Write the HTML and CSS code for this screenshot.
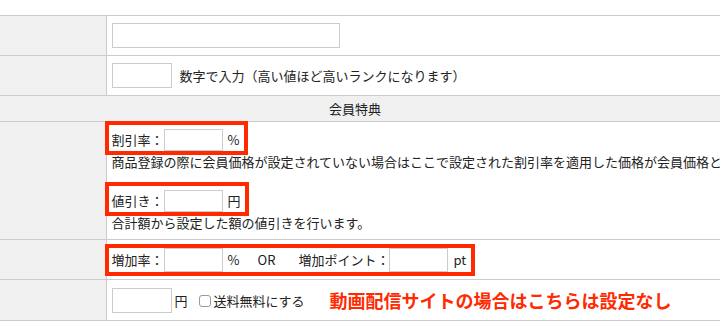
FILE: index.html
```html
<!DOCTYPE html>
<html lang="ja">
<head>
    <meta charset="UTF-8">
    <meta name="viewport" content="width=device-width, initial-scale=1.0">
    <title>会員ランク設定</title>
    <link rel="stylesheet" href="styles.css">
</head>
<body>
    <div class="page">
        <table class="form-table">
            <tr>
                <th class="row-head"></th>
                <td><input type="text" class="text-wide"></td>
            </tr>
            <tr>
                <th class="row-head"></th>
                <td><input type="text" class="text-short"><span class="note">数字で入力（高い値ほど高いランクになります）</span></td>
            </tr>
            <tr>
                <th colspan="2" class="section">会員特典</th>
            </tr>
            <tr>
                <th class="row-head"></th>
                <td class="benefit">
                    <div class="marked">
                        <label for="rate">割引率：</label>
                        <input type="text" id="rate" class="text-num">
                        <span class="unit">%</span>
                    </div>
                    <p class="desc">商品登録の際に会員価格が設定されていない場合はここで設定された割引率を適用した価格が会員価格と</p>
                    <div class="marked">
                        <label for="discount">値引き：</label>
                        <input type="text" id="discount" class="text-num">
                        <span class="unit">円</span>
                    </div>
                    <p class="desc">合計額から設定した額の値引きを行います。</p>
                </td>
            </tr>
            <tr>
                <th class="row-head"></th>
                <td class="point-cell">
                    <div class="marked marked-tight">
                        <label for="prate">増加率：</label>
                        <input type="text" id="prate" class="text-num">
                        <span class="unit">%</span>
                        <span class="or">OR</span>
                        <label for="ppoint">増加ポイント：</label>
                        <input type="text" id="ppoint" class="text-num">
                        <span class="unit">pt</span>
                    </div>
                </td>
            </tr>
            <tr>
                <th class="row-head"></th>
                <td>
                    <input type="text" class="text-short"><span class="yen">円</span>
                    <label class="check"><input type="checkbox">送料無料にする</label>
                    <span class="alert">動画配信サイトの場合はこちらは設定なし</span>
                </td>
            </tr>
        </table>
    </div>
</body>
</html>
```

FILE: styles.css
```css
* {
    box-sizing: border-box;
}
body {
    margin: 0;
    font-family: "Noto Sans CJK JP", sans-serif;
    font-size: 13px;
    color: #222;
    overflow: hidden;
}
.page {
    padding-top: 15px;
}
.form-table {
    width: 720px;
    table-layout: fixed;
    border-collapse: collapse;
}
.form-table th,
.form-table td {
    border-top: 1px solid #ccc;
    border-bottom: 1px solid #ccc;
}
.form-table td {
    padding: 7px 5px;
    white-space: nowrap;
    vertical-align: middle;
}
.row-head {
    width: 106px;
    background-color: #f0f0f0;
    border-right: 1px solid #ccc;
}
.section {
    height: 26px;
    padding: 0 10px 0 0;
    background-color: #f0f0f0;
    font-weight: normal;
    text-align: center;
    line-height: 24px;
}
input[type="text"] {
    border: 1px solid #ccc;
    border-radius: 0;
    margin: 0;
    padding: 2px 4px;
    font: inherit;
    vertical-align: middle;
}
.text-wide {
    width: 228px;
    height: 25px;
}
.text-short {
    width: 60px;
    height: 25px;
}
.text-num {
    width: 59px;
    height: 22px;
}
.note {
    margin-left: 8px;
    vertical-align: middle;
}
.benefit {
    padding-top: 0 !important;
    padding-bottom: 9px !important;
}
.marked {
    display: inline-flex;
    align-items: center;
    margin-left: -7px;
    padding: 4px 4px 0 3px;
    border: 4px solid #ff2a00;
    line-height: 22px;
}
.benefit .marked:first-child {
    margin-top: -1px;
}
.marked label {
    display: inline-block;
}
.unit {
    margin-left: 5px;
}
.desc {
    margin: 0 0 13px;
    line-height: 14px;
}
.desc:last-child {
    margin-bottom: 0;
}
.point-cell {
    padding-top: 4px !important;
    padding-bottom: 3px !important;
}
.marked-tight {
    padding: 0 5px 0 3px;
}
.marked-tight .text-num {
    height: 24px;
}
.or {
    margin: 0 23px 0 18px;
}
.yen {
    margin-left: 3px;
    vertical-align: middle;
}
.check {
    margin-left: 9px;
    vertical-align: middle;
}
.check input {
    appearance: none;
    width: 12px;
    height: 12px;
    margin: 0 2px 0 0;
    border: 1px solid #999;
    border-radius: 3px;
    background: #fff;
    vertical-align: -1px;
}
.alert {
    margin-left: 22px;
    color: #ff2a00;
    font-size: 18px;
    font-weight: bold;
    vertical-align: middle;
}
```
